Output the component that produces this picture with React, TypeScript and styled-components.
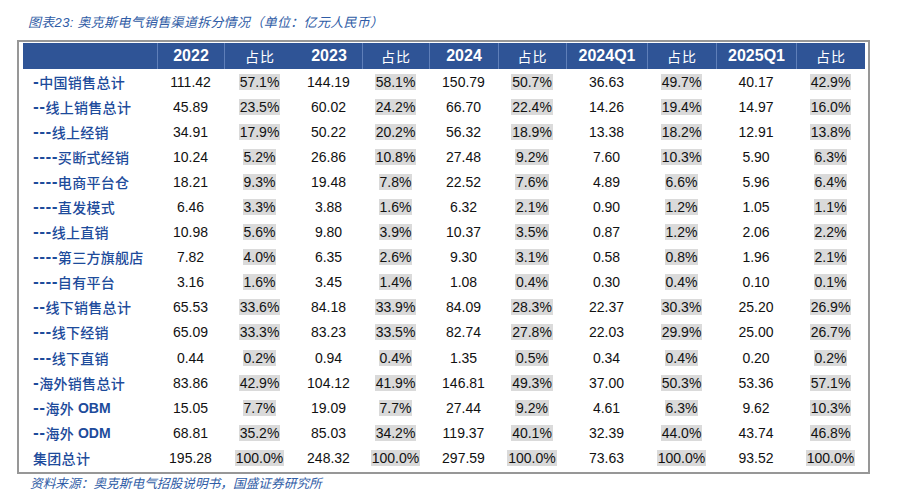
import React from "react";
import styled, { createGlobalStyle } from "styled-components";

const GlobalStyle = createGlobalStyle`
  html, body { margin: 0; padding: 0; background: #ffffff; }
  #root { width: 898px; height: 503px; overflow: hidden; }
`;

const COLS = "134px 67px 71px 67px 67px 69px 68px 81px 69px 80px 69px";

const Page = styled.div`
  padding: 15px 0 0 17px;
  box-sizing: border-box;
`;

const Title = styled.div`
  margin-left: 11px;
  height: 16px;
  line-height: 16px;
  font-family: "Liberation Sans", "Noto Sans CJK SC", sans-serif;
  font-size: 13px;
  letter-spacing: 0.3px;
  font-style: italic;
  color: #2f5ca6;
  white-space: nowrap;
`;

const Frame = styled.div`
  margin-top: 9px;
  width: 853px;
  box-sizing: border-box;
  border: 2px solid #979797;
  padding: 1px 3px 1px 4px;
`;

const HeaderRow = styled.div`
  display: grid;
  grid-template-columns: ${COLS};
  height: 26px;
  background: #2f5496;
`;

const HeadCell = styled.div<{ $sep?: boolean; $cjk?: boolean }>`
  display: flex;
  align-items: center;
  justify-content: center;
  box-sizing: border-box;
  border-left: 1px solid ${(p) => (p.$sep ? "#5f7fb9" : "transparent")};
  color: #ffffff;
  font-family: ${(p) =>
    p.$cjk ? `"Noto Sans CJK SC", sans-serif` : `"Liberation Sans", sans-serif`};
  font-size: ${(p) => (p.$cjk ? "14px" : "16px")};
  font-weight: ${(p) => (p.$cjk ? 400 : 700)};
  letter-spacing: ${(p) => (p.$cjk ? "1px" : "0")};
`;

const DataRow = styled.div`
  display: grid;
  grid-template-columns: ${COLS};
  height: 25.1px;
`;

const LabelCell = styled.div`
  display: flex;
  align-items: center;
  padding-left: 10px;
  color: #1d4b9b;
  font-size: 14px;
  white-space: nowrap;
`;

const LatinRun = styled.span<{ $dash?: boolean }>`
  font-family: ${(p) =>
    p.$dash ? `"DejaVu Sans", sans-serif` : `"Liberation Sans", sans-serif`};
  font-weight: 700;
  white-space: pre;
  letter-spacing: ${(p) => (p.$dash ? "0.4px" : "0")};
`;

const CjkRun = styled.span`
  font-family: "Noto Sans CJK SC", sans-serif;
  font-weight: 500;
  letter-spacing: 0.3px;
`;

const NumCell = styled.div`
  display: flex;
  align-items: center;
  justify-content: center;
  font-family: "Liberation Sans", sans-serif;
  font-size: 14px;
  color: #111111;
`;

const Share = styled.span`
  background: #dadada;
  line-height: 16px;
  padding: 0 1px;
`;

const Source = styled.div`
  margin: 1px 0 0 13px;
  height: 16px;
  line-height: 16px;
  font-family: "Noto Sans CJK SC", sans-serif;
  font-size: 12.7px;
  font-style: italic;
  color: #2f5ca6;
  white-space: nowrap;
`;

const headers: { text: string; cjk?: boolean; sep?: boolean }[] = [
  { text: "" },
  { text: "2022", sep: true },
  { text: "占比", cjk: true, sep: true },
  { text: "2023" },
  { text: "占比", cjk: true, sep: true },
  { text: "2024", sep: true },
  { text: "占比", cjk: true, sep: true },
  { text: "2024Q1", sep: true },
  { text: "占比", cjk: true, sep: true },
  { text: "2025Q1", sep: true },
  { text: "占比", cjk: true, sep: true },
];

const rows: [string, string[]][] = [
  ["-中国销售总计", ["111.42", "57.1%", "144.19", "58.1%", "150.79", "50.7%", "36.63", "49.7%", "40.17", "42.9%"]],
  ["--线上销售总计", ["45.89", "23.5%", "60.02", "24.2%", "66.70", "22.4%", "14.26", "19.4%", "14.97", "16.0%"]],
  ["---线上经销", ["34.91", "17.9%", "50.22", "20.2%", "56.32", "18.9%", "13.38", "18.2%", "12.91", "13.8%"]],
  ["----买断式经销", ["10.24", "5.2%", "26.86", "10.8%", "27.48", "9.2%", "7.60", "10.3%", "5.90", "6.3%"]],
  ["----电商平台仓", ["18.21", "9.3%", "19.48", "7.8%", "22.52", "7.6%", "4.89", "6.6%", "5.96", "6.4%"]],
  ["----直发模式", ["6.46", "3.3%", "3.88", "1.6%", "6.32", "2.1%", "0.90", "1.2%", "1.05", "1.1%"]],
  ["---线上直销", ["10.98", "5.6%", "9.80", "3.9%", "10.37", "3.5%", "0.87", "1.2%", "2.06", "2.2%"]],
  ["----第三方旗舰店", ["7.82", "4.0%", "6.35", "2.6%", "9.30", "3.1%", "0.58", "0.8%", "1.96", "2.1%"]],
  ["----自有平台", ["3.16", "1.6%", "3.45", "1.4%", "1.08", "0.4%", "0.30", "0.4%", "0.10", "0.1%"]],
  ["--线下销售总计", ["65.53", "33.6%", "84.18", "33.9%", "84.09", "28.3%", "22.37", "30.3%", "25.20", "26.9%"]],
  ["---线下经销", ["65.09", "33.3%", "83.23", "33.5%", "82.74", "27.8%", "22.03", "29.9%", "25.00", "26.7%"]],
  ["---线下直销", ["0.44", "0.2%", "0.94", "0.4%", "1.35", "0.5%", "0.34", "0.4%", "0.20", "0.2%"]],
  ["-海外销售总计", ["83.86", "42.9%", "104.12", "41.9%", "146.81", "49.3%", "37.00", "50.3%", "53.36", "57.1%"]],
  ["--海外 OBM", ["15.05", "7.7%", "19.09", "7.7%", "27.44", "9.2%", "4.61", "6.3%", "9.62", "10.3%"]],
  ["--海外 ODM", ["68.81", "35.2%", "85.03", "34.2%", "119.37", "40.1%", "32.39", "44.0%", "43.74", "46.8%"]],
  ["集团总计", ["195.28", "100.0%", "248.32", "100.0%", "297.59", "100.0%", "73.63", "100.0%", "93.52", "100.0%"]],
];

type Run = { kind: "dash" | "latin" | "cjk"; s: string };

function splitRuns(text: string): Run[] {
  const out: Run[] = [];
  for (const ch of text) {
    const kind: Run["kind"] = ch === "-" ? "dash" : ch.charCodeAt(0) < 128 ? "latin" : "cjk";
    const last = out[out.length - 1];
    if (last && last.kind === kind) last.s += ch;
    else out.push({ kind, s: ch });
  }
  return out;
}

function Label({ text }: { text: string }) {
  return (
    <LabelCell>
      {splitRuns(text).map((r, i) =>
        r.kind === "cjk" ? (
          <CjkRun key={i}>{r.s}</CjkRun>
        ) : (
          <LatinRun key={i} $dash={r.kind === "dash"}>
            {r.s}
          </LatinRun>
        )
      )}
    </LabelCell>
  );
}

export default function App() {
  return (
    <>
      <GlobalStyle />
      <Page>
        <Title>图表23: 奥克斯电气销售渠道拆分情况（单位：亿元人民币）</Title>
        <Frame>
          <HeaderRow>
            {headers.map((h, i) => (
              <HeadCell key={i} $sep={h.sep} $cjk={h.cjk}>
                {h.text}
              </HeadCell>
            ))}
          </HeaderRow>
          {rows.map(([label, vals]) => (
            <DataRow key={label}>
              <Label text={label} />
              {vals.map((v, i) => (
                <NumCell key={i}>{i % 2 === 1 ? <Share>{v}</Share> : v}</NumCell>
              ))}
            </DataRow>
          ))}
        </Frame>
        <Source>资料来源：奥克斯电气招股说明书，国盛证券研究所</Source>
      </Page>
    </>
  );
}
